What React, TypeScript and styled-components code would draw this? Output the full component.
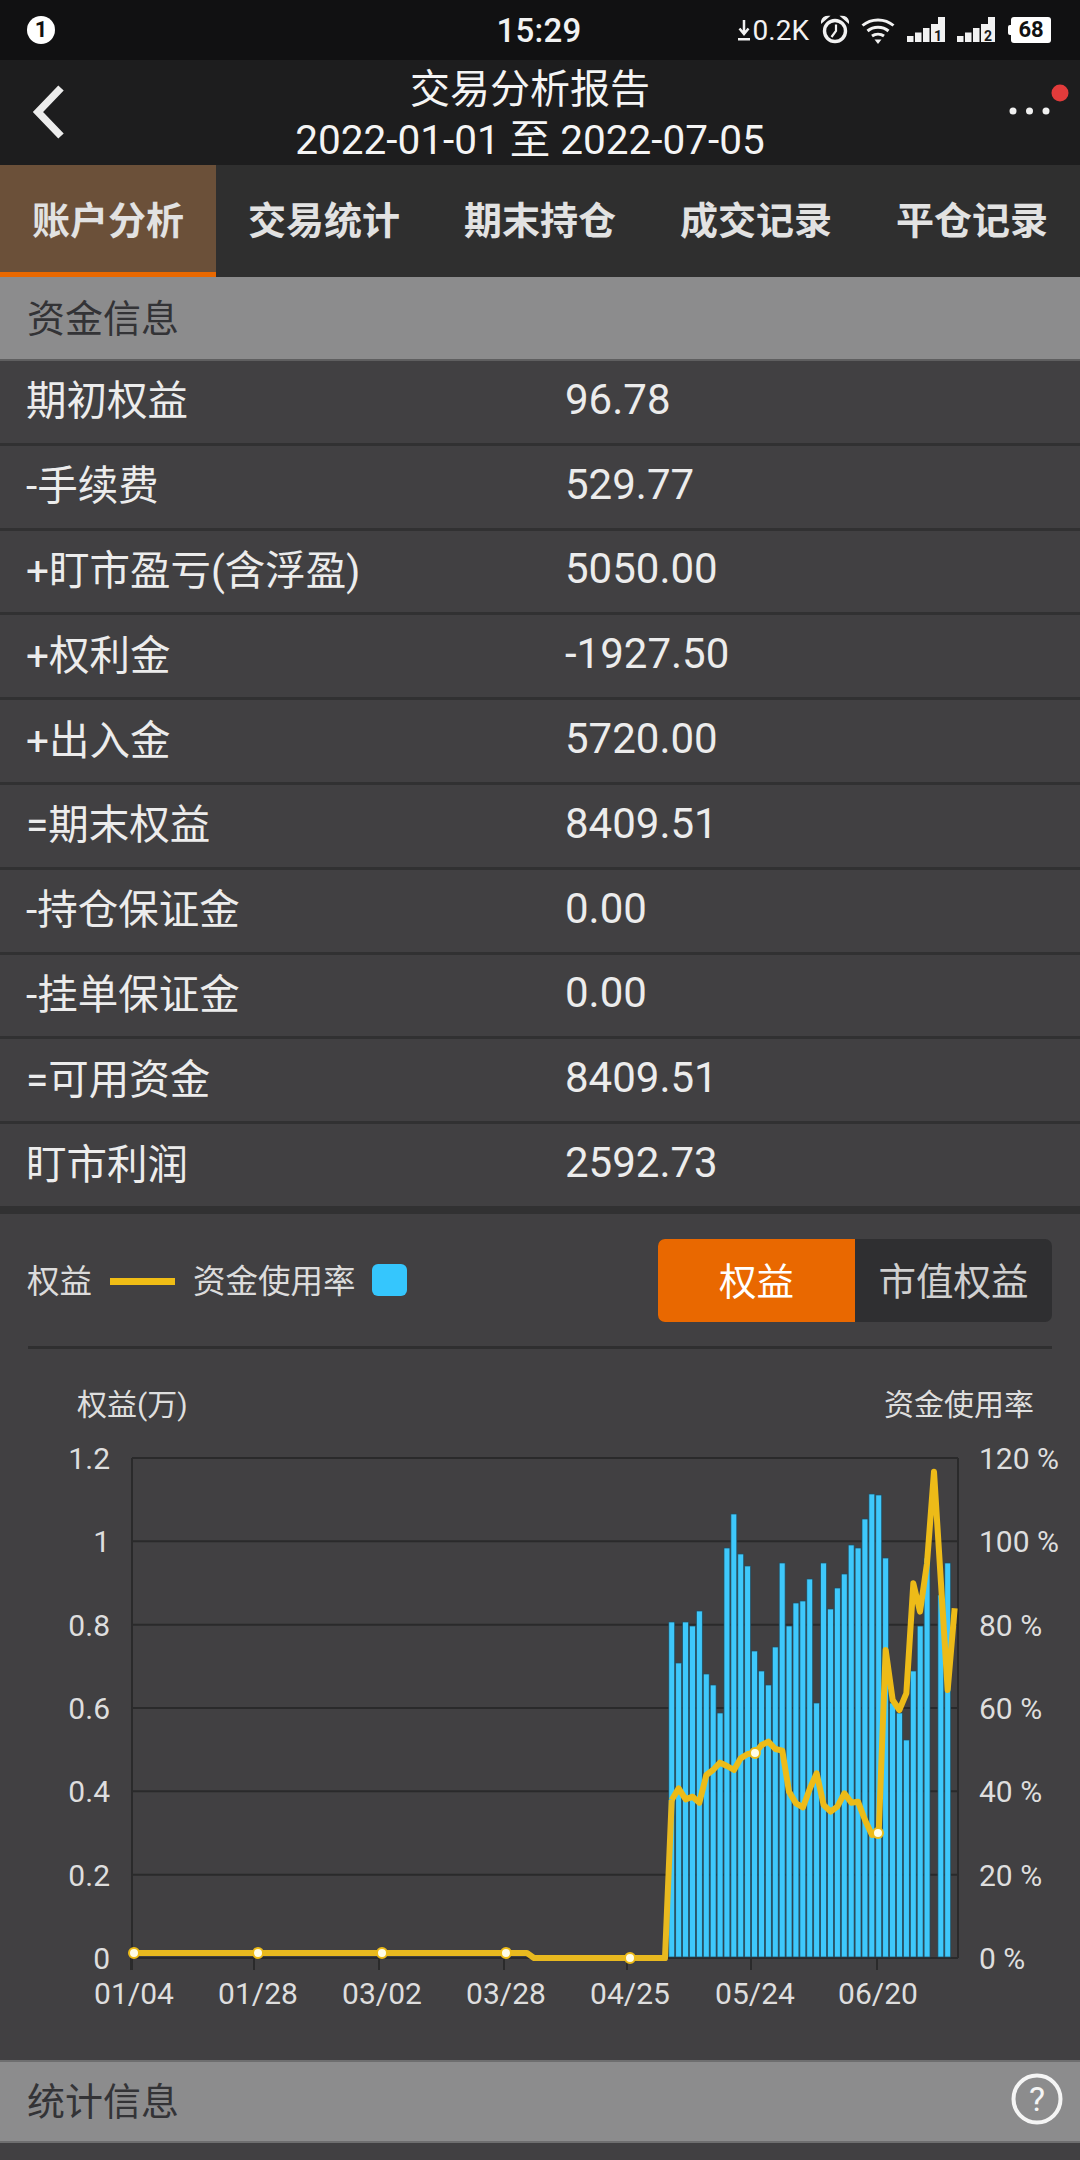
import React from "react";
import styled, { createGlobalStyle } from "styled-components";

const FONT = `Roboto, "Noto Sans CJK SC", "Noto Sans", sans-serif`;

const Global = createGlobalStyle`
  html, body { margin: 0; padding: 0; background: #414042; }
  body { font-family: ${FONT}; }
`;

const Page = styled.div`
  width: 1080px;
  height: 2160px;
  overflow: hidden;
  display: flex;
  flex-direction: column;
  background: #414042;
  color: #e8e8e8;
`;

const StatusBar = styled.div`
  height: 60px;
  flex: none;
  background: #111112;
  display: grid;
  grid-template-columns: 1fr auto 1fr;
  align-items: center;
  padding: 0 29px 0 27px;
`;
const NoticeBadge = styled.div`
  width: 28px;
  height: 28px;
  border-radius: 50%;
  background: #fff;
  color: #111;
  font-size: 22px;
  font-weight: 700;
  line-height: 28px;
  text-align: center;
`;
const Clock = styled.div`
  font-size: 33px;
  font-weight: 500;
  color: #f2f2f2;
  letter-spacing: 0.3px;
`;
const StatusIcons = styled.div`
  display: flex;
  align-items: center;
  justify-content: flex-end;
  gap: 12px;
  color: #f2f2f2;
`;
const NetSpeed = styled.div`
  display: flex;
  align-items: center;
  gap: 3px;
  font-size: 28px;
`;
const Battery = styled.div`
  position: relative;
  width: 40px;
  height: 26px;
  margin-left: 4px;
  background: #fff;
  border-radius: 3px;
  color: #111;
  font-size: 22px;
  font-weight: 700;
  line-height: 26px;
  text-align: center;
  &::before {
    content: "";
    position: absolute;
    left: -3px;
    top: 8px;
    width: 3px;
    height: 10px;
    background: #fff;
    border-radius: 2px 0 0 2px;
  }
`;

const Header = styled.header`
  position: relative;
  height: 105px;
  flex: none;
  box-sizing: border-box;
  background: #1d1d1e;
  display: flex;
  flex-direction: column;
  align-items: center;
  justify-content: center;
  padding: 5px 20px 0 0;
`;
const TitleLine = styled.div<{ $size: number }>`
  font-size: ${(p) => p.$size}px;
  line-height: 51px;
  color: #f4f4f4;
  white-space: nowrap;
`;
const BackButton = styled.svg`
  position: absolute;
  left: 30px;
  top: 22px;
`;
const MoreButton = styled.svg`
  position: absolute;
  right: 10px;
  top: 20px;
`;

const Tabs = styled.nav`
  height: 112px;
  flex: none;
  display: grid;
  grid-template-columns: repeat(5, 216px);
  background: #2f2f2f;
`;
const Tab = styled.div<{ $active?: boolean }>`
  display: flex;
  align-items: center;
  justify-content: center;
  font-size: 38px;
  font-weight: 700;
  color: #e2e2e2;
  padding-bottom: 2px;
  box-sizing: border-box;
  background: ${(p) => (p.$active ? "#6b5039" : "transparent")};
  border-bottom: 5px solid ${(p) => (p.$active ? "#e96800" : "transparent")};
`;

const SectionBar = styled.div`
  flex: none;
  box-sizing: border-box;
  background: #8c8c8d;
  color: #333336;
  font-size: 38px;
  display: flex;
  align-items: center;
  justify-content: space-between;
  padding: 0 17px 6px 27px;
`;
const FundsBar = styled(SectionBar)`
  height: 84px;
  border-bottom: 2px solid #5f5f60;
`;
const StatsBar = styled(SectionBar)`
  height: 83px;
  border-top: 2px solid #6e6e6f;
  border-bottom: 2px solid #6e6e6f;
`;

const Rows = styled.div`
  flex: none;
  display: flex;
  flex-direction: column;
`;
const Row = styled.div`
  height: 84.8px;
  display: grid;
  grid-template-columns: 539px 1fr;
  align-items: center;
  padding-left: 26px;
  box-sizing: border-box;
  border-bottom: 3px solid #313132;
  &:last-child {
    height: 90px;
    border-bottom-width: 8px;
  }
`;
const RowLabel = styled.div`
  font-size: 40.5px;
  padding-bottom: 8px;
  color: #ececec;
  white-space: nowrap;
`;
const RowValue = styled.div`
  font-size: 42px;
  padding-bottom: 5px;
  color: #ececec;
`;

const Legend = styled.div`
  height: 135px;
  flex: none;
  margin: 0 28px;
  box-sizing: border-box;
  border-bottom: 3px solid #2f2f30;
  display: flex;
  align-items: center;
  font-size: 32.5px;
  color: #dcdcdc;
`;
const LegendText = styled.span`
  padding-bottom: 3px;
  &:first-child {
    margin-left: -1px;
  }
`;
const LegendLine = styled.span`
  width: 65px;
  height: 7px;
  margin: 2px 18px 0 18px;
  background: #f0bd15;
`;
const LegendSwatch = styled.span`
  width: 35px;
  height: 32px;
  margin-left: 16px;
  border-radius: 6px;
  background: #35c6fd;
`;
const Toggle = styled.div`
  margin-left: auto;
  display: grid;
  grid-template-columns: 197px 197px;
  height: 83px;
  border-radius: 7px;
  overflow: hidden;
  font-size: 37.5px;
  background: #2f2f31;
`;
const ToggleOption = styled.div<{ $on?: boolean }>`
  display: flex;
  align-items: center;
  justify-content: center;
  padding-bottom: 3px;
  color: ${(p) => (p.$on ? "#fff" : "#d0d0d0")};
  background: ${(p) => (p.$on ? "#e96800" : "transparent")};
`;

const ChartSvg = styled.svg`
  display: block;
  flex: none;
  width: 1080px;
  height: 711px;
  font-family: ${FONT};
`;
const ChartText = styled.text`
  fill: #dedede;
  font-size: 30px;
`;
const ChartTitle = styled.text`
  fill: #dedede;
  font-size: 30px;
`;

const rows: [string, string][] = [
  ["期初权益", "96.78"],
  ["-手续费", "529.77"],
  ["+盯市盈亏(含浮盈)", "5050.00"],
  ["+权利金", "-1927.50"],
  ["+出入金", "5720.00"],
  ["=期末权益", "8409.51"],
  ["-持仓保证金", "0.00"],
  ["-挂单保证金", "0.00"],
  ["=可用资金", "8409.51"],
  ["盯市利润", "2592.73"],
];
const tabs = ["账户分析", "交易统计", "期末持仓", "成交记录", "平仓记录"];

const PLOT = { left: 132, right: 958, top: 1458, bottom: 1958 };
const yLeft = ["1.2", "1", "0.8", "0.6", "0.4", "0.2", "0"];
const yRight = ["120 %", "100 %", "80 %", "60 %", "40 %", "20 %", "0 %"];
const xLabels: [string, number, number][] = [
  ["01/04", 134, 131],
  ["01/28", 258, 254],
  ["03/02", 382, 379],
  ["03/28", 506, 504],
  ["04/25", 630, 627],
  ["05/24", 755, 751],
  ["06/20", 878, 877],
];
const barTops: (number | null)[] = [
  1622, 1663, 1622, 1626, 1611, 1674, 1685, 1713, 1548, 1514, 1554, 1566, 1651, 1671, 1685, 1647,
  1563, 1626, 1603, 1601, 1579, 1703, 1563, 1609, 1588, 1574, 1545, 1548, 1519, 1494, 1495, 1558,
  1703, 1713, 1740, 1671, 1626, 1558, null, 1595, 1563,
];
const zoomPts: [number, number][] = [
  [95, 360], [116, 325], [137, 358], [158, 350], [178, 368], [199, 285], [219, 270], [240, 248],
  [261, 258], [282, 270], [302, 235], [323, 222], [344, 220], [365, 195], [385, 185], [406, 207],
  [427, 212], [447, 335], [468, 370], [489, 382], [510, 325], [530, 280], [551, 375], [572, 395],
  [592, 380], [613, 340], [634, 368], [654, 365], [675, 420], [696, 465], [716, 460], [737, -90],
  [758, 60], [778, 90], [799, 40], [820, -290], [840, -205], [861, -350], [882, -625], [903, -290],
  [923, 30], [944, -215],
];
const risePts = zoomPts.map(([x, y]) => `${640 + x / 3},${1680 + y / 3}`).join(" ");
const flatPts = "134,1953 527,1953 534,1958 665,1958 671.7,1800";
const markers: [number, number][] = [
  [134, 1953], [258, 1953], [382, 1953], [506, 1953], [630, 1958], [755, 1753], [878, 1833],
];

const SignalIcon = ({ n }: { n: string }) => (
  <svg width="38" height="26" viewBox="0 0 38 26">
    <rect x="0" y="19" width="6.500" height="6" fill="#f2f2f2" />
    <rect x="8" y="15.500" width="6.500" height="9.500" fill="#f2f2f2" />
    <rect x="16" y="11" width="6.500" height="14" fill="#f2f2f2" />
    <path d="M31 0h7v25H24V7h7z" fill="#f2f2f2" />
    <text x="31" y="24" fontSize="14" fontWeight="700" fill="#1a1a1a" textAnchor="middle" fontFamily="Roboto">
      {n}
    </text>
  </svg>
);

export default function App() {
  const gridYs = yLeft.map((_, i) => PLOT.top + (i * (PLOT.bottom - PLOT.top)) / 6);
  return (
    <Page>
      <Global />
      <StatusBar>
        <NoticeBadge>1</NoticeBadge>
        <Clock>15:29</Clock>
        <StatusIcons>
          <NetSpeed>
            <svg width="12" height="24" viewBox="0 0 12 24">
              <path d="M6 2V15M1.500 10.500 6 16l4.500-5.500" stroke="#f2f2f2" strokeWidth="2.500" fill="none" />
              <rect x="0" y="20" width="12" height="2.500" fill="#f2f2f2" />
            </svg>
            0.2K
          </NetSpeed>
          <svg width="28" height="30" viewBox="0 0 28 30">
            <circle cx="14" cy="16" r="10.500" stroke="#f2f2f2" strokeWidth="3.400" fill="none" />
            <path d="M15 9.500v6.500l-4.500 6" stroke="#f2f2f2" strokeWidth="2.200" fill="none" />
            <path d="M0.500 7.500C1 3 4 1.500 7.500 1.500L0.500 7.500zM27.500 7.500C27 3 24 1.500 20.500 1.500L27.500 7.500z" stroke="#f2f2f2" strokeWidth="1.500" fill="#f2f2f2" />
          </svg>
          <svg width="34" height="28" viewBox="0 0 34 28">
            <path d="M1.500 9.500C10 2 24 2 32.500 9.500" stroke="#f2f2f2" strokeWidth="3" fill="none" />
            <path d="M6.500 15C12.500 10 21.500 10 27.500 15" stroke="#f2f2f2" strokeWidth="3" fill="none" />
            <path d="M11 20c3.500-2.500 8.500-2.500 12 0" stroke="#f2f2f2" strokeWidth="3" fill="none" />
            <path d="M13.500 23.500h7L17 28z" fill="#f2f2f2" />
          </svg>
          <SignalIcon n="1" />
          <SignalIcon n="2" />
          <Battery>68</Battery>
        </StatusIcons>
      </StatusBar>

      <Header>
        <BackButton width="44" height="60" viewBox="0 0 44 60">
          <path d="M31 6 8 30l23 24" stroke="#ececec" strokeWidth="7.500" fill="none" />
        </BackButton>
        <TitleLine $size={40}>交易分析报告</TitleLine>
        <TitleLine $size={40.5}>2022-01-01 至 2022-07-05</TitleLine>
        <MoreButton width="70" height="50" viewBox="0 0 70 50">
          <circle cx="13" cy="31" r="3.500" fill="#f0f0f0" />
          <circle cx="29.500" cy="31" r="3.500" fill="#f0f0f0" />
          <circle cx="46" cy="31" r="3.500" fill="#f0f0f0" />
          <circle cx="60" cy="13" r="8.500" fill="#e23b3b" />
        </MoreButton>
      </Header>

      <Tabs>
        {tabs.map((t, i) => (
          <Tab key={t} $active={i === 0}>
            {t}
          </Tab>
        ))}
      </Tabs>

      <FundsBar>资金信息</FundsBar>

      <Rows>
        {rows.map(([label, value]) => (
          <Row key={label}>
            <RowLabel>{label}</RowLabel>
            <RowValue>{value}</RowValue>
          </Row>
        ))}
      </Rows>

      <Legend>
        <LegendText>权益</LegendText>
        <LegendLine />
        <LegendText>资金使用率</LegendText>
        <LegendSwatch />
        <Toggle>
          <ToggleOption $on>权益</ToggleOption>
          <ToggleOption>市值权益</ToggleOption>
        </Toggle>
      </Legend>

      <ChartSvg viewBox="0 1349 1080 711">
        <ChartTitle x="77" y="1415">权益(万)</ChartTitle>
        <ChartTitle x="884" y="1415">资金使用率</ChartTitle>

        {gridYs.map((y) => (
          <line key={y} x1={PLOT.left} x2={PLOT.right} y1={y} y2={y} stroke="#2a2a2b" strokeWidth="2" />
        ))}
        <line x1={PLOT.left} x2={PLOT.left} y1={PLOT.top} y2={1970} stroke="#2a2a2b" strokeWidth="2" />
        <line x1={PLOT.right} x2={PLOT.right} y1={PLOT.top} y2={PLOT.bottom} stroke="#2a2a2b" strokeWidth="2" />
        {xLabels.map(([label, , tick]) => (
          <line key={label} x1={tick} x2={tick} y1={PLOT.bottom} y2={1970} stroke="#2a2a2b" strokeWidth="2" />
        ))}

        {barTops.map((top, i) =>
          top === null ? null : (
            <rect
              key={i}
              x={668.8 + i * 6.9}
              y={top}
              width={5.9}
              height={PLOT.bottom - top - 1}
              fill="#3ec8fb"
              stroke="#204a5e"
              strokeWidth="0.7"
            />
          ),
        )}

        <polyline points={flatPts} fill="none" stroke="#e8b91f" strokeWidth="6" strokeLinejoin="round" />
        <polyline points={risePts} fill="none" stroke="#edbb18" strokeWidth="6" strokeLinejoin="round" />
        {markers.map(([x, y]) => (
          <circle key={x} cx={x} cy={y} r="5" fill="#fffde8" stroke="#edbb18" strokeWidth="2" />
        ))}

        {yLeft.map((label, i) => (
          <ChartText key={label} x="110" y={gridYs[i] + 11} textAnchor="end">
            {label}
          </ChartText>
        ))}
        {yRight.map((label, i) => (
          <ChartText key={label} x="979" y={gridYs[i] + 11}>
            {label}
          </ChartText>
        ))}
        {xLabels.map(([label, center]) => (
          <ChartText key={label} x={center} y="2004" textAnchor="middle">
            {label}
          </ChartText>
        ))}
      </ChartSvg>

      <StatsBar>
        统计信息
        <svg width="52" height="52" viewBox="0 0 52 52">
          <circle cx="26" cy="26" r="23.500" stroke="#f5f5f5" strokeWidth="4" fill="none" />
          <text x="26" y="38" fontSize="34" fill="#f5f5f5" textAnchor="middle" fontFamily="Roboto">?</text>
        </svg>
      </StatsBar>
    </Page>
  );
}
